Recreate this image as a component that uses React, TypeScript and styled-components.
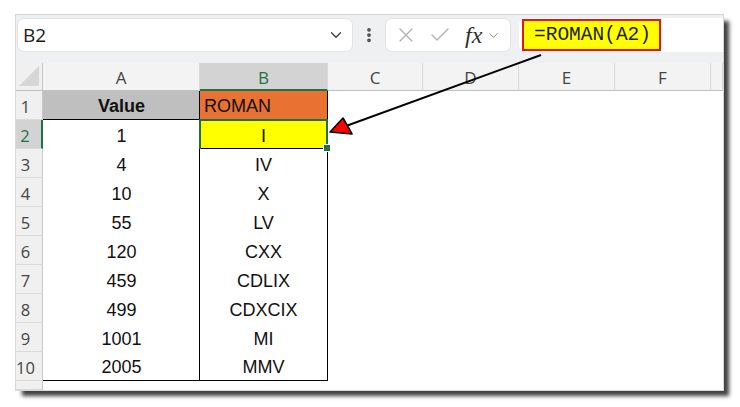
import React from 'react'
import styled, {createGlobalStyle} from 'styled-components'
import {X, Check, ChevronDown, EllipsisVertical} from 'lucide-react'

const GlobalStyle = createGlobalStyle`
  html, body {
    margin: 0;
    padding: 0;
    background: #ffffff;
  }
  body {
    font-family: 'Liberation Sans', Arial, sans-serif;
  }
`

interface Row {
  value: string
  roman: string
}

const rows: Row[] = [
  {value: '1', roman: 'I'},
  {value: '4', roman: 'IV'},
  {value: '10', roman: 'X'},
  {value: '55', roman: 'LV'},
  {value: '120', roman: 'CXX'},
  {value: '459', roman: 'CDLIX'},
  {value: '499', roman: 'CDXCIX'},
  {value: '1001', roman: 'MI'},
  {value: '2005', roman: 'MMV'},
]

const columns = ['A', 'B', 'C', 'D', 'E', 'F', '']

const GREEN = '#1e7145'

const Page = styled.div`
  width: 740px;
  height: 407px;
  padding: 15px 0 0 16px;
  box-sizing: border-box;
`

const Window = styled.div`
  position: relative;
  width: 707px;
  height: 375px;
  display: flex;
  flex-direction: column;
  background: #ffffff;
  overflow: hidden;
  box-shadow: 0 0 0 1px #d6d6d6, 6px 6px 4px rgba(0, 0, 0, 0.75);
`

const Toolbar = styled.div`
  height: 48px;
  flex: none;
  display: flex;
  align-items: flex-start;
  padding: 3px 0 0 1px;
  box-sizing: border-box;
  background: #eef0f2;
`

const NameBox = styled.div`
  width: 336px;
  height: 34px;
  display: flex;
  align-items: center;
  justify-content: space-between;
  padding: 0 7px 0 5px;
  box-sizing: border-box;
  background: #ffffff;
  border: 1px solid #e2e4e6;
  border-radius: 7px;
  font-family: 'Open Sans', 'Noto Sans', sans-serif;
  font-size: 19px;
  color: #1b1b1b;
`

const DotsSlot = styled.div`
  width: 32px;
  height: 34px;
  display: flex;
  align-items: center;
  justify-content: center;
  color: #4a4a4a;
`

const FxBox = styled.div`
  width: 126px;
  height: 34px;
  display: flex;
  align-items: center;
  padding-left: 8px;
  box-sizing: border-box;
  background: #ffffff;
  border: 1px solid #e2e4e6;
  border-radius: 7px;
  color: #b0b0b0;
`

const FxLabel = styled.span`
  font-family: 'Liberation Serif', 'Times New Roman', serif;
  font-style: italic;
  font-size: 24px;
  color: #2f2f2f;
  margin: 0 4px 0 13px;
  line-height: 1;
`

const FormulaBar = styled.div`
  flex: 1;
  height: 34px;
  margin-left: 8px;
  padding: 1px 0 0 3px;
  box-sizing: border-box;
  background: #ffffff;
  border-radius: 7px 0 0 7px;
`

const FormulaHighlight = styled.div`
  width: 139px;
  height: 32px;
  box-sizing: border-box;
  border: 2px solid #e8141c;
  background: #ffff00;
  display: flex;
  align-items: center;
  padding-left: 10px;
  font-family: 'Liberation Mono', 'DejaVu Sans Mono', monospace;
  font-size: 19.5px;
  color: #1c1c1c;
`

const Sheet = styled.div`
  flex: 1;
  display: grid;
  grid-template-columns: 27px 157px 128px 95px 96px 96px 96px 1fr;
  grid-template-rows: 28px repeat(10, 29px) 1fr;
  font-size: 18px;
  color: #111111;
`

const Corner = styled.div`
  background: #f0f0f0;
  border-right: 1px solid #c8c8c8;
  border-bottom: 1px solid #c0c0c0;
  box-sizing: border-box;
  display: flex;
  align-items: flex-end;
  justify-content: flex-end;
  padding: 0 3px 4px 0;
`

const CornerTriangle = styled.div`
  width: 0;
  height: 0;
  border-left: 20px solid transparent;
  border-bottom: 20px solid #d6d6d6;
`

const ColHead = styled.div<{$selected?: boolean}>`
  display: flex;
  align-items: center;
  justify-content: center;
  padding-top: 2px;
  box-sizing: border-box;
  background: ${p => (p.$selected ? '#d3d3d3' : '#f3f3f3')};
  color: ${p => (p.$selected ? GREEN : '#444444')};
  border-right: 1px solid #d9d9d9;
  border-bottom: ${p => (p.$selected ? `2px solid ${GREEN}` : '1px solid #c0c0c0')};
  font-family: 'Open Sans', 'Noto Sans', sans-serif;
  font-size: 17px;
`

const RowHead = styled.div<{$selected?: boolean}>`
  display: flex;
  align-items: center;
  justify-content: center;
  padding: 2px 7px 0 0;
  box-sizing: border-box;
  background: ${p => (p.$selected ? '#d3d3d3' : '#f0f0f0')};
  color: ${p => (p.$selected ? GREEN : '#444444')};
  border-bottom: 1px solid #dadada;
  border-right: ${p => (p.$selected ? `2px solid ${GREEN}` : '1px solid #c8c8c8')};
  font-family: 'Open Sans', 'Noto Sans', sans-serif;
  font-size: 16.5px;
  white-space: nowrap;
`

const Cell = styled.div<{
  $align?: 'left' | 'center'
  $bg?: string
  $bold?: boolean
  $boxed?: boolean
  $bottom?: boolean
}>`
  display: flex;
  align-items: center;
  justify-content: ${p => (p.$align === 'left' ? 'flex-start' : 'center')};
  padding-left: ${p => (p.$align === 'left' ? '4px' : '0')};
  padding-top: 3px;
  box-sizing: border-box;
  background: ${p => p.$bg || '#ffffff'};
  font-weight: ${p => (p.$bold ? 700 : 400)};
  border-left: ${p => (p.$boxed ? '1px solid #000' : 'none')};
  border-right: ${p => (p.$boxed ? '1px solid #000' : 'none')};
  border-bottom: ${p => (p.$bottom ? '1px solid #000' : 'none')};
  margin-left: ${p => (p.$boxed ? '-1px' : '0')};
`

const ActiveCell = styled(Cell)`
  position: relative;
  border: 1px solid #000;
  border-left: 1px solid #e8141c;
  border-right: 1px solid #e8141c;
  &::after {
    content: '';
    position: absolute;
    inset: -2px -1px -1px -1px;
    border: 2px solid ${GREEN};
    border-bottom: none;
  }
  &::before {
    content: '';
    position: absolute;
    right: -4px;
    bottom: -4px;
    width: 6px;
    height: 6px;
    background: ${GREEN};
    border: 1px solid #ffffff;
    z-index: 1;
  }
`

const Blank = styled.div`
  background: #ffffff;
`

const Annotation = styled.svg`
  position: absolute;
  left: 0;
  top: 0;
  width: 707px;
  height: 375px;
  pointer-events: none;
`

const App = () => {
  const emptyCols = 5
  return (
    <>
      <GlobalStyle />
      <Page>
        <Window>
          <Toolbar>
            <NameBox>
              <span>B2</span>
              <ChevronDown size={18} strokeWidth={1.6} color="#3a3a3a" />
            </NameBox>
            <DotsSlot>
              <EllipsisVertical size={18} strokeWidth={3} />
            </DotsSlot>
            <FxBox>
              <X size={24} strokeWidth={1.3} />
              <Check size={24} strokeWidth={1.3} style={{marginLeft: '10px'}} />
              <FxLabel>fx</FxLabel>
              <ChevronDown size={15} strokeWidth={1.6} color="#8a8a8a" />
            </FxBox>
            <FormulaBar>
              <FormulaHighlight>=ROMAN(A2)</FormulaHighlight>
            </FormulaBar>
          </Toolbar>

          <Sheet>
            <Corner>
              <CornerTriangle />
            </Corner>
            {columns.map((c, i) => (
              <ColHead key={i} $selected={c === 'B'}>
                {c}
              </ColHead>
            ))}

            <RowHead>1</RowHead>
            <Cell $bg="#bfbfbf" $bold $bottom>
              Value
            </Cell>
            <Cell $bg="#e97132" $align="left" $boxed $bottom>
              ROMAN
            </Cell>
            {Array.from({length: emptyCols}).map((_, j) => (
              <Blank key={j} />
            ))}

            {rows.map((r, i) => {
              const n = i + 2
              const last = n === 10
              return (
                <React.Fragment key={n}>
                  <RowHead $selected={n === 2}>{n}</RowHead>
                  <Cell $bottom={last}>{r.value}</Cell>
                  {n === 2 ? (
                    <ActiveCell $bg="#ffff00" $boxed>
                      {r.roman}
                    </ActiveCell>
                  ) : (
                    <Cell $boxed $bottom={last}>
                      {r.roman}
                    </Cell>
                  )}
                  {Array.from({length: emptyCols}).map((_, j) => (
                    <Blank key={j} />
                  ))}
                </React.Fragment>
              )
            })}

            <RowHead />
          </Sheet>

          <Annotation viewBox="0 0 707 375">
            <line x1="525" y1="40" x2="330" y2="111" stroke="#000" strokeWidth="2" />
            <polygon
              points="314,117 327,103 336,119"
              fill="#ff0000"
              stroke="#000"
              strokeWidth="1.6"
              strokeLinejoin="round"
            />
          </Annotation>
        </Window>
      </Page>
    </>
  )
}

export default App
